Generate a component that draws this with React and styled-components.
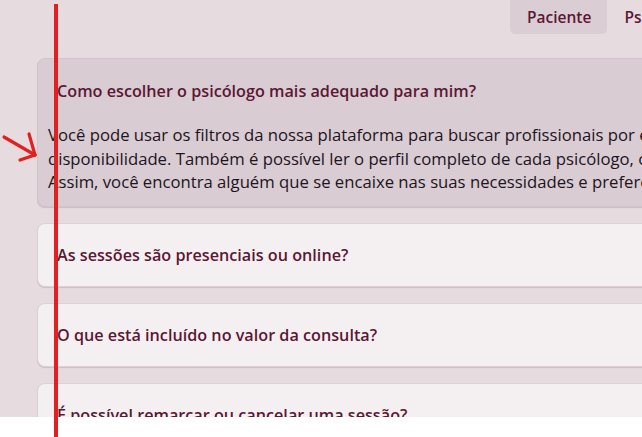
import React from "react";
import styled, { createGlobalStyle } from "styled-components";

const Global = createGlobalStyle`
  html, body { margin: 0; padding: 0; background: #ffffff; }
  body { width: 642px; height: 437px; overflow: hidden; position: relative; }
  * { box-sizing: border-box; }
`;

const Page = styled.div`
  height: 417px;
  background: #e6dce0;
  overflow: hidden;
  font-family: "Open Sans", "Noto Sans", sans-serif;
`;

const TabBar = styled.nav`
  display: flex;
  padding-left: 510px;
  height: 34px;
`;

const Tab = styled.div`
  flex: none;
  padding: 0 16px 0 17px;
  height: 34px;
  display: flex;
  align-items: center;
  font-size: 15.5px;
  font-weight: 600;
  color: #5c1735;
  background: ${(p) => (p.$active ? "#dacdd3" : "transparent")};
  border-radius: 0 0 5px 5px;
`;

const List = styled.div`
  display: flex;
  flex-direction: column;
  gap: 16px;
  margin: 24px 0 0 37px;
  width: 760px;
`;

const Card = styled.section`
  background: ${(p) => (p.$open ? "#d9ccd2" : "#f4f0f1")};
  border: 1px solid ${(p) => (p.$open ? "#d2c4ca" : "#dcd2d6")};
  border-radius: 8px;
  box-shadow: 0 1px 1px rgba(80, 50, 65, 0.18);
  padding: ${(p) => (p.$open ? "21px 0 12px" : "20px 0")};
`;

const Question = styled.h3`
  margin: 0;
  padding-left: 19px;
  font-size: 16.2px;
  line-height: 22px;
  font-weight: 600;
  color: #5c1735;
`;

const Answer = styled.p`
  margin: 21px 0 0;
  padding-left: 10px;
  font-size: 16.7px;
  line-height: 23.5px;
  font-weight: 500;
  color: #21141e;
  white-space: nowrap;
`;

const Marker = styled.div`
  position: absolute;
  left: 54px;
  top: 4px;
  width: 4px;
  height: 433px;
  background: #e41f1f;
`;

const Arrow = styled.svg`
  position: absolute;
  left: 0;
  top: 130px;
`;

const faqs = [
  "As sessões são presenciais ou online?",
  "O que está incluído no valor da consulta?",
  "É possível remarcar ou cancelar uma sessão?",
];

export default function App() {
  return (
    <>
      <Global />
      <Page>
        <TabBar>
          <Tab $active>Paciente</Tab>
          <Tab>Psicólogo</Tab>
        </TabBar>
        <List>
          <Card $open>
            <Question>Como escolher o psicólogo mais adequado para mim?</Question>
            <Answer>
              Você pode usar os filtros da nossa plataforma para buscar profissionais por especialidade,
              <br />
              disponibilidade. Também é possível ler o perfil completo de cada psicólogo, conhecendo
              <br />
              Assim, você encontra alguém que se encaixe nas suas necessidades e preferências.
            </Answer>
          </Card>
          {faqs.map((q) => (
            <Card key={q}>
              <Question>{q}</Question>
            </Card>
          ))}
        </List>
      </Page>
      <Arrow width="40" height="34" viewBox="0 130 40 34">
        <g stroke="#e41f1f" strokeWidth="3.2" strokeLinecap="round" fill="none">
          <path d="M4 137 L35 155" />
          <path d="M29 134 L35 155" />
          <path d="M20 160 L35 155" />
        </g>
      </Arrow>
      <Marker />
    </>
  );
}
